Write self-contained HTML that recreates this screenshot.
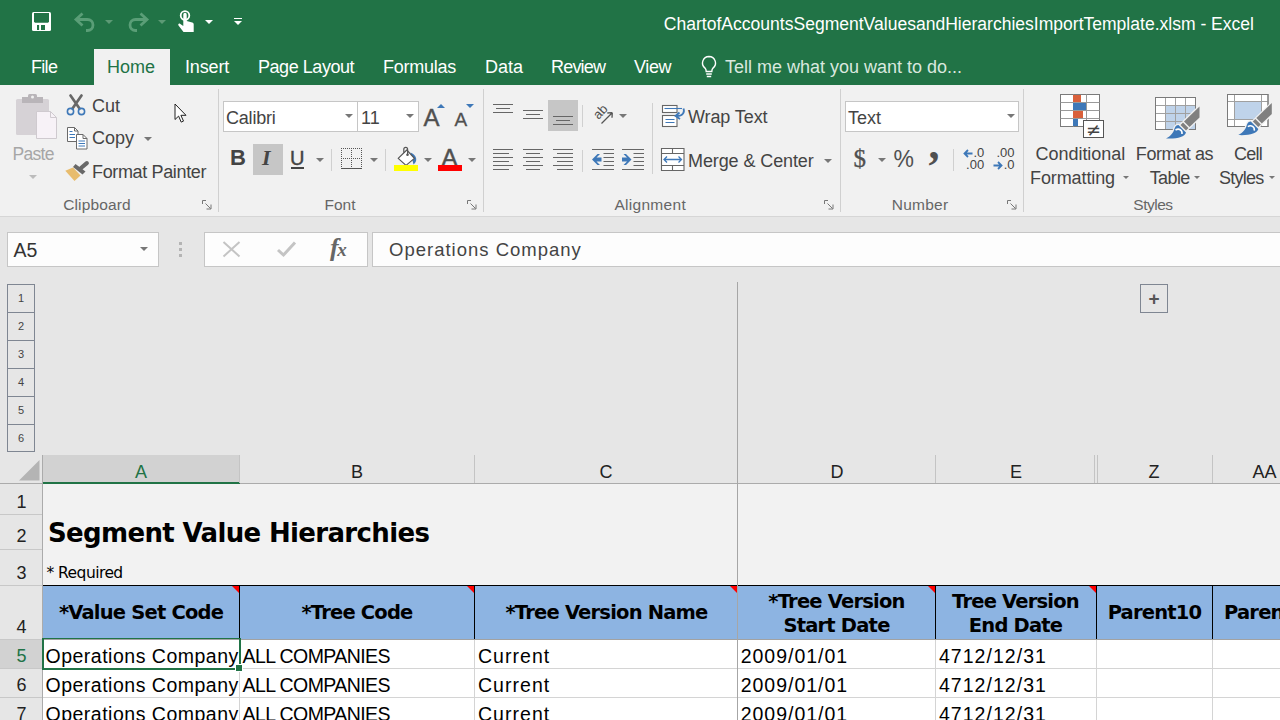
<!DOCTYPE html>
<html>
<head>
<meta charset="utf-8">
<title>Excel</title>
<style>
html,body{margin:0;padding:0;}
body{width:1280px;height:720px;overflow:hidden;position:relative;background:#e6e6e6;font-family:"Liberation Sans",sans-serif;color:#444;}
.abs,.t{position:absolute;}
.t{white-space:nowrap;line-height:1;}
svg{position:absolute;overflow:visible;}
/* title + tabs */
#green{left:0;top:0;width:1280px;height:85px;background:#217346;}
#title{right:26px;top:16px;font-size:17.55px;color:#fff;}
.tab{top:58px;font-size:18px;color:#fff;}
#hometab{left:94px;top:49px;width:76px;height:36px;background:#f1f1f1;}
/* ribbon */
#ribbon{left:0;top:85px;width:1280px;height:131px;background:#f1f1f1;}
#ribline{left:0;top:216px;width:1280px;height:1px;background:#d6d6d6;}
.rt{font-size:18px;color:#444;}
.gl{font-size:15.5px;color:#666;top:196.7px;}
.sep{width:1px;background:#d0d0d0;top:89px;height:123px;}
.box{background:#fff;border:1px solid #c6c6c6;box-sizing:border-box;}
.da{width:0;height:0;border-left:4px solid transparent;border-right:4px solid transparent;border-top:4px solid #777;}
.ua{width:0;height:0;border-left:4px solid transparent;border-right:4px solid transparent;border-bottom:4px solid #3e78b8;}
/* formula bar */
/* grid */
.hdr{background:#e6e6e6;}
.ch{top:463px;font-size:18px;color:#222;transform:translateX(-50%);}
.rh{font-size:18px;color:#222;left:0.5px;width:42px;text-align:center;}
.vl{width:1px;background:#b4b4b4;}
.cell{font-size:19.5px;color:#000;}
.c1{letter-spacing:0.5px;}.c2{letter-spacing:-0.58px;}.c3{letter-spacing:1.03px;}.c4{letter-spacing:0.98px;}.c5{letter-spacing:1.03px;}
.th{font-family:"DejaVu Sans",sans-serif;font-weight:bold;color:#000;font-size:19.5px;text-align:center;line-height:24.5px;white-space:nowrap;transform:translateX(-50%);letter-spacing:-0.8px;}
.ob{left:7px;width:28px;height:28px;border:1px solid #7f8692;box-sizing:border-box;font-size:11px;color:#444;text-align:center;line-height:27px;}
</style>
</head>
<body>
<div class="abs" id="green"></div>
<div class="abs" id="hometab"></div>
<div class="t" id="title">ChartofAccountsSegmentValuesandHierarchiesImportTemplate.xlsm - Excel</div>

<div class="t tab" style="left:31px;letter-spacing:-0.7px">File</div>
<div class="t tab" style="left:107px;color:#217346">Home</div>
<div class="t tab" style="left:185px;letter-spacing:-0.15px">Insert</div>
<div class="t tab" style="left:258px;letter-spacing:-0.45px">Page Layout</div>
<div class="t tab" style="left:383px;letter-spacing:-0.25px">Formulas</div>
<div class="t tab" style="left:485px">Data</div>
<div class="t tab" style="left:551px;letter-spacing:-0.8px">Review</div>
<div class="t tab" style="left:634px;letter-spacing:-0.4px">View</div>
<div class="t tab" style="left:725px;color:#d9e8df">Tell me what you want to do...</div>

<div class="abs" id="ribbon"></div>
<div class="abs" id="ribline"></div>

<!-- RIBBON CONTENT -->
<!-- quick access toolbar -->
<svg style="left:32px;top:12px" width="20" height="20" viewBox="0 0 20 20"><rect x="0" y="0" width="19" height="19" rx="1.500" fill="#fff"/><path d="M2 1h15v8.800l-1 1h-13l-1-1z" fill="#217346"/><rect x="5" y="13" width="2.100" height="5" fill="#217346"/><rect x="9" y="13" width="4" height="5" fill="#217346"/></svg>
<svg style="left:74px;top:12px" width="22" height="20" viewBox="0 0 22 20" fill="none" stroke="#5a9e77" stroke-width="2.800"><path d="M8.500 1.500L2 7.500L8.500 13.500"/><path d="M2.500 7.500H13.500a5.500 5.500 0 0 1 0 11h-1.500"/></svg>
<div class="abs da" style="left:105px;top:20px;border-top-color:#5c9a75"></div>
<svg style="left:127px;top:12px" width="22" height="20" viewBox="0 0 22 20" fill="none" stroke="#5a9e77" stroke-width="2.800"><path d="M13.500 1.500L20 7.500L13.500 13.500"/><path d="M19.500 7.500H8.500a5.500 5.500 0 0 0 0 11h1.500"/></svg>
<div class="abs da" style="left:158px;top:20px;border-top-color:#5c9a75"></div>
<svg style="left:177px;top:10px" width="18" height="23" viewBox="0 0 18 23"><circle cx="8" cy="5.500" r="4.300" fill="none" stroke="#fff" stroke-width="1.800"/><path d="M6.300 4.500a1.700 1.700 0 0 1 3.400 0V11l5.500 1.500c1 .3 1.500 1 1.500 2V22H6.500L1.500 15.500c-.8-1.200.6-2.500 1.800-1.600L6.300 16z" fill="#fff"/></svg>
<div class="abs da" style="left:205px;top:20px;border-top-color:#fff"></div>
<div class="abs" style="left:234px;top:17.500px;width:8px;height:1.500px;background:#fff"></div>
<div class="abs da" style="left:234px;top:21px;border-top-color:#fff"></div>

<!-- tell me bulb -->
<svg style="left:700px;top:55px" width="18" height="24" viewBox="0 0 18 24" fill="none" stroke="#fff" stroke-width="1.400"><path d="M9 1.500a6.500 6.500 0 0 0-4 11.600c.8.800 1.200 1.800 1.200 3.400h5.600c0-1.600.4-2.600 1.200-3.400A6.500 6.500 0 0 0 9 1.500z"/><path d="M6.200 19h5.600M6.800 21.500h4.400"/></svg>

<!-- CLIPBOARD -->
<svg style="left:15px;top:93px" width="44" height="48" viewBox="0 0 44 48"><rect x="1" y="6" width="33" height="36" rx="1.500" fill="#d6d2d6"/><rect x="7" y="4" width="21" height="6" fill="#b9b5b9"/><rect x="13" y="1" width="9" height="6" rx="1.500" fill="#b9b5b9"/><circle cx="17.500" cy="4" r="1.500" fill="#f1f1f1"/><path d="M21.500 18.500h14l6 6v21h-20z" fill="#f7f2f7" stroke="#cfcacf" stroke-width="1"/><path d="M35.500 18.500v6h6" fill="none" stroke="#cfcacf" stroke-width="1"/></svg>
<div class="t rt" style="left:12.500px;top:145.500px;color:#a6a6a6;font-size:17.500px;letter-spacing:-0.700px">Paste</div>
<div class="abs da" style="left:28.500px;top:175px;border-top-color:#bcbcbc"></div>

<svg style="left:66px;top:94px" width="20" height="22" viewBox="0 0 20 22" fill="none"><path d="M4.500 1.500L13.500 14.500M15.500 1.500L6.500 14.500" stroke="#686868" stroke-width="2.700" stroke-linecap="round"/><circle cx="4.500" cy="17.500" r="3.100" stroke="#3e78b8" stroke-width="1.600"/><circle cx="15.500" cy="17.500" r="3.100" stroke="#3e78b8" stroke-width="1.600"/></svg>
<div class="t rt" style="left:92px;top:96.500px">Cut</div>

<svg style="left:67px;top:127px" width="21" height="23" viewBox="0 0 21 23" fill="none"><path d="M.5.500h7l3.500 3.500v10.500H.500z" fill="#fff" stroke="#6a6a6a"/><path d="M7.500.500v3.500H11" stroke="#6a6a6a"/><path d="M2.500 4.500h3M2.500 7.500h5.500M2.500 10.500h5.500" stroke="#3e78b8"/><path d="M9.500 7.500h6.500l4 4v10.500H9.500z" fill="#fff" stroke="#6a6a6a"/><path d="M16 7.500v4h4" stroke="#6a6a6a"/><path d="M11.500 14h6.500M11.500 16.500h6.500M11.500 19h6.500" stroke="#3e78b8"/></svg>
<div class="t rt" style="left:92px;top:129px">Copy</div>
<div class="abs da" style="left:143.500px;top:137px"></div>

<svg style="left:65px;top:160px" width="24" height="22" viewBox="0 0 24 22"><path d="M21.800 3.200L16 8" stroke="#686868" stroke-width="4.200" stroke-linecap="round" fill="none"/><path d="M10.500 4L20.500 11.500l-3 3L8 7z" fill="#686868"/><path d="M.3 10.800L8 7.500l7.500 8L9.500 21z" fill="#e8bc6d"/></svg>
<div class="t rt" id="fp" style="left:92px;top:162.500px;letter-spacing:-0.350px">Format Painter</div>

<div class="t gl" style="left:63.200px;letter-spacing:0.13px">Clipboard</div>
<svg class="ln" style="left:202px;top:200px" width="10" height="10" viewBox="0 0 10 10" fill="none" stroke="#777" stroke-width="1"><path d="M.5 4V.500H4"/><path d="M3.500 3.500l5 5M9 4.500V9H4.500"/></svg>
<div class="abs sep" style="left:218px"></div>

<!-- mouse cursor -->
<svg style="left:173.500px;top:103px" width="14" height="21" viewBox="0 0 14 21"><path d="M1 1v15.500l3.600-3.400 2.600 6 2.300-1-2.600-5.800H12z" fill="#fff" stroke="#222" stroke-width="1"/></svg>

<!-- FONT -->
<div class="abs box" style="left:223px;top:101px;width:135px;height:31px"></div>
<div class="abs box" style="left:357px;top:101px;width:62px;height:31px"></div>
<div class="t rt" style="left:226px;top:108.500px;letter-spacing:-0.200px">Calibri</div>
<div class="t rt" style="left:361px;top:108.500px">11</div>
<div class="abs da" style="left:345px;top:114px"></div>
<div class="abs da" style="left:406px;top:114px"></div>
<div class="t" style="left:423.500px;top:105.500px;font-size:24px;color:#505050;-webkit-text-stroke:0.4px #505050">A</div>
<div class="abs ua" style="left:437px;top:104px"></div>
<div class="t" style="left:454.500px;top:109.500px;font-size:19px;color:#505050;-webkit-text-stroke:0.3px #505050">A</div>
<div class="abs da" style="left:466px;top:104px;border-top-color:#3e78b8"></div>

<div class="abs" style="left:253px;top:144px;width:30px;height:31px;background:#c6c6c6"></div>
<div class="t" style="left:230px;top:147px;font-size:22px;font-weight:bold;color:#444">B</div>
<div class="t" style="left:262px;top:147px;font-size:22px;font-weight:bold;font-style:italic;font-family:'Liberation Serif',serif;color:#444">I</div>
<div class="t" style="left:290px;top:147.500px;font-size:20px;color:#444;-webkit-text-stroke:0.400px #444">U</div>
<div class="abs" style="left:291px;top:167px;width:13px;height:1.500px;background:#444"></div>
<div class="abs da" style="left:315.500px;top:158px"></div>
<div class="abs" style="left:331px;top:149px;width:1px;height:22px;background:#d0d0d0"></div>
<svg style="left:341px;top:148px" width="22" height="22" viewBox="0 0 22 22" fill="none" stroke="#555" stroke-width="1" shape-rendering="crispEdges"><path d="M0 .5h21M0 10.500h21M.5 0v20M10.500 0v20M20.500 0v20" stroke-dasharray="1 1"/><path d="M0 20.500h21" stroke="#555" stroke-width="1.200"/></svg>
<div class="abs da" style="left:369.500px;top:158px"></div>
<div class="abs" style="left:385px;top:149px;width:1px;height:22px;background:#d0d0d0"></div>
<svg style="left:394px;top:146px" width="26" height="26" viewBox="0 0 26 26"><path d="M16.500 6.500c4 1.500 6.500 5 5.500 8.500-.5 1.500-1.500 2.500-2.500 3.500z" fill="#3e78b8"/><path d="M12.800 4L4.200 12.400l7.800 7 8.400-7z" fill="#fff" stroke="#555" stroke-width="1.200" stroke-linejoin="round"/><path d="M9.800 6.800V3.200a1.900 1.900 0 0 1 3.800 0V8.500" fill="none" stroke="#555" stroke-width="1.200"/><circle cx="13.500" cy="8.800" r="1.300" fill="#555"/><rect x="0" y="19" width="24" height="6" fill="#ffff00"/></svg>
<div class="abs da" style="left:423.500px;top:158px"></div>
<div class="t" style="left:441.500px;top:145.500px;font-size:24px;color:#505050;-webkit-text-stroke:0.5px #505050">A</div>
<div class="abs" style="left:438px;top:165px;width:24px;height:6px;background:#ff0000"></div>
<div class="abs da" style="left:467.500px;top:158px"></div>

<div class="t gl" style="left:324.500px">Font</div>
<svg class="ln" style="left:467px;top:200px" width="10" height="10" viewBox="0 0 10 10" fill="none" stroke="#777" stroke-width="1"><path d="M.5 4V.500H4"/><path d="M3.500 3.500l5 5M9 4.500V9H4.500"/></svg>
<div class="abs sep" style="left:483px"></div>

<!-- ALIGNMENT -->
<div class="abs" style="left:548px;top:100px;width:30px;height:31px;background:#c6c6c6"></div>
<svg style="left:493px;top:100px" width="90" height="30" viewBox="0 0 90 30" stroke="#666" stroke-width="1.1" fill="none"><path d="M0 4.500h20M3 8.500h14M0 12.500h20"/><path d="M30 10.500h20M33 14.500h14M30 18.500h20"/><path d="M60 16.500h20M63 20.500h14M60 24.500h20"/></svg>
<div class="abs" style="left:582px;top:105px;width:1px;height:22px;background:#d0d0d0"></div>
<svg style="left:592px;top:104px" width="22" height="22" viewBox="0 0 22 22" fill="none" stroke="#555" stroke-width="1.300"><path d="M9.500 19.500L20 9M20.300 8.700l-5 .3M20.300 8.700l-.3 5"/><text x="0" y="0" font-size="13" font-family="Liberation Sans, sans-serif" fill="#505050" stroke="none" transform="translate(6.500 16) rotate(-47)">ab</text></svg>
<div class="abs da" style="left:618.500px;top:113.500px"></div>
<svg style="left:493px;top:149px" width="82" height="22" viewBox="0 0 82 22" stroke="#666" stroke-width="1.1" fill="none"><path d="M0 .5h20M0 4.500h16M0 8.500h20M0 12.500h16M0 16.500h20M0 20.500h16"/><path d="M30 .5h20M33 4.500h14M30 8.500h20M33 12.500h14M30 16.500h20M33 20.500h14"/><path d="M60 .5h20M64 4.500h16M60 8.500h20M64 12.500h16M60 16.500h20M64 20.500h16"/></svg>
<div class="abs" style="left:582px;top:150px;width:1px;height:22px;background:#d0d0d0"></div>
<svg style="left:592px;top:149px" width="54" height="22" viewBox="0 0 54 22" stroke="#666" stroke-width="1.1" fill="none"><path d="M0 .5h22M11.500 4.500h10.500M11.500 8.500h10.500M11.500 12.500h10.500M11.500 16.500h10.500M0 20.500h22"/><path d="M0 10.500l5.500-5.500h2.500l-3.500 3.500h5v4h-5l3.500 3.500h-2.500z" fill="#3e78b8" stroke="none"/><path d="M30 .5h22M41.500 4.500h10.500M41.500 8.500h10.500M41.500 12.500h10.500M41.500 16.500h10.500M30 20.500h22"/><path d="M39.500 10.500l-5.500-5.500h-2.500l3.500 3.500h-5v4h5l-3.500 3.500h2.500z" fill="#3e78b8" stroke="none"/></svg>
<div class="abs" style="left:652px;top:103px;width:1px;height:71px;background:#d0d0d0"></div>
<svg style="left:661px;top:104px" width="26" height="24" viewBox="0 0 26 24" fill="none"><rect x="1.500" y="1.500" width="14.500" height="7" fill="#fff" stroke="#666" stroke-width="1.1"/><rect x="1.500" y="11.500" width="14.500" height="11" fill="#fff" stroke="#666" stroke-width="1.1"/><path d="M3.500 4.500h17.500" stroke="#3e78b8" stroke-width="1.1"/><path d="M4.500 15.500h9M4.500 18.500h9" stroke="#3e78b8" stroke-width="1.1"/><path d="M22.500 4.500c1.500 4-1 7.500-6.500 7.500" stroke="#3e78b8" stroke-width="1.800"/><path d="M18.500 8.500l-4 3.500 4.500 3" stroke="#3e78b8" stroke-width="1.800"/></svg>
<div class="t rt" style="left:688px;top:108px;letter-spacing:-0.100px">Wrap Text</div>
<svg style="left:661px;top:148px" width="24" height="23" viewBox="0 0 24 23" fill="none" stroke="#666" stroke-width="1.1"><path d="M.5.500h22.500v22H.500z" fill="#fff"/><path d="M.5 5.500h22.500M.500 17.500h22.500M11.500 .500v5M11.500 17.500v5"/><path d="M3 11.500h17.500M6 8.500l-3 3 3 3M17.500 8.500l3 3-3 3" stroke="#3e78b8" stroke-width="1.300"/></svg>
<div class="t rt" id="mc" style="left:688px;top:151.500px;letter-spacing:-0.100px">Merge &amp; Center</div>
<div class="abs da" style="left:823.500px;top:159px"></div>
<div class="t gl" style="left:614.400px;letter-spacing:0.3px">Alignment</div>
<svg class="ln" style="left:824px;top:200px" width="10" height="10" viewBox="0 0 10 10" fill="none" stroke="#777" stroke-width="1"><path d="M.5 4V.500H4"/><path d="M3.500 3.500l5 5M9 4.500V9H4.500"/></svg>
<div class="abs sep" style="left:840px"></div>

<!-- NUMBER -->
<div class="abs box" style="left:845px;top:101px;width:174px;height:31px"></div>
<div class="t rt" style="left:848px;top:108.500px">Text</div>
<div class="abs da" style="left:1006.500px;top:114px"></div>
<div class="t" style="left:853.500px;top:146px;font-size:25px;color:#505050;font-family:'Liberation Serif',serif;-webkit-text-stroke:0.3px #505050">$</div>
<div class="abs da" style="left:877.500px;top:157.500px"></div>
<div class="t" style="left:893.500px;top:148px;font-size:23px;color:#505050">%</div>
<div class="t" id="comma" style="left:928.500px;top:122.500px;font-size:44px;font-weight:bold;font-family:'Liberation Serif',serif;color:#505050">,</div>
<div class="abs" style="left:953px;top:149px;width:1px;height:22px;background:#d0d0d0"></div>
<div class="t" style="left:973.400px;top:145.600px;font-size:13px;color:#444">.0</div>
<div class="t" style="left:966.100px;top:157.800px;font-size:13px;color:#444">.00</div>
<svg style="left:963px;top:148.500px" width="10" height="9" viewBox="0 0 10 9" fill="none" stroke="#3e78b8" stroke-width="1.800"><path d="M9.500 4.500H1.500M5 1L1.500 4.500 5 8"/></svg>
<div class="t" style="left:996.400px;top:145.600px;font-size:13px;color:#444">.00</div>
<div class="t" style="left:1003.700px;top:157.800px;font-size:13px;color:#444">.0</div>
<svg style="left:992.500px;top:160.800px" width="10" height="9" viewBox="0 0 10 9" fill="none" stroke="#3e78b8" stroke-width="1.800"><path d="M.5 4.500H8.500M5 1l3.500 3.500L5 8"/></svg>
<div class="t gl" style="left:891.700px;letter-spacing:0.25px">Number</div>
<svg class="ln" style="left:1007px;top:200px" width="10" height="10" viewBox="0 0 10 10" fill="none" stroke="#777" stroke-width="1"><path d="M.5 4V.500H4"/><path d="M3.500 3.500l5 5M9 4.500V9H4.500"/></svg>
<div class="abs sep" style="left:1023px"></div>

<!-- STYLES -->
<svg style="left:1060px;top:94px" width="46" height="46" viewBox="0 0 46 46" fill="none"><rect x=".5" y=".5" width="39" height="32" fill="#fff" stroke="#7a7a7a"/><path d="M.5 8.500h39M.500 16.500h39M.500 24.500h39M13.500.500v32M26.500.500v32" stroke="#9a9a9a"/><rect x="13" y="1" width="8" height="7" fill="#d9603b"/><rect x="13" y="9" width="13" height="7" fill="#3e78b8"/><rect x="13" y="17" width="10" height="7" fill="#d9603b"/><rect x="13" y="25" width="5" height="7" fill="#3e78b8"/><rect x="23.500" y="26.500" width="20" height="17" fill="#fff" stroke="#555"/><text x="33.500" y="41.500" font-size="18" text-anchor="middle" font-family="DejaVu Sans, sans-serif" fill="#444">≠</text></svg>
<div class="t rt" id="cf1" style="left:1035.500px;top:145px;letter-spacing:-0.030px">Conditional</div>
<div class="t rt" id="cf2" style="left:1030px;top:169px;letter-spacing:-0.100px">Formatting</div>
<div class="abs da" style="left:1122.500px;top:176px;border-width:3.500px 3.500px 0;"></div>

<svg style="left:1155px;top:96px" width="48" height="46" viewBox="0 0 48 46" fill="none"><rect x=".5" y="1.500" width="40" height="32" fill="#fff" stroke="#7a7a7a"/><rect x="10.500" y="9.500" width="30" height="24" fill="#bfd3ea"/><path d="M.5 9.500h40M.500 17.500h40M.500 25.500h40M10.500 1.500v32M20.500 1.500v32M30.500 1.500v32" stroke="#a0a0a0"/><rect x=".5" y="1.500" width="40" height="32" stroke="#7a7a7a"/><g transform="translate(0 0)"><path d="M44.500 10.500v11l-10 9.500-5.500-5.500z M28 26.500l5.500 5.500-2.500 2.500-5.500-5.500z M23.500 29l7.500 7.500c-1.500 4.500-8.500 6.500-20 6 5-2.500 7.500-6 8.500-10 .8-2.500 2.200-3.500 4-3.500z" fill="none" stroke="#f1f1f1" stroke-width="2.500" stroke-linejoin="round"/><path d="M44.500 10.500v11l-10 9.500-5.500-5.500z" fill="#808080"/><path d="M28 26.500l5.500 5.500-2.500 2.500-5.500-5.500z" fill="#808080"/><path d="M23.500 29l7.500 7.500c-1.500 4.500-8.500 6.500-20 6 5-2.500 7.500-6 8.500-10 .8-2.500 2.200-3.500 4-3.500z" fill="#3e78b8"/><path d="M20.500 34c3.500-2 7 0 6.500 4" fill="none" stroke="#fff" stroke-width="1.600"/></g></svg>
<div class="t rt" id="ft1" style="left:1135.800px;top:145px;letter-spacing:-0.400px">Format as</div>
<div class="t rt" id="ft2" style="left:1149.700px;top:169px;letter-spacing:-0.600px">Table</div>
<div class="abs da" style="left:1194px;top:176px;border-width:3.500px 3.500px 0;"></div>

<svg style="left:1227px;top:94px" width="56" height="48" viewBox="0 0 56 48" fill="none"><rect x=".5" y=".5" width="40.500" height="32" fill="#fff" stroke="#7a7a7a"/><rect x="8" y="7.500" width="26" height="18" fill="#bfd3ea"/><path d="M.5 7.500h40.500M.500 25.500h40.500M7.500 .500v32M34.500 .500v32" stroke="#a0a0a0"/><rect x=".5" y=".5" width="40.500" height="32" stroke="#7a7a7a"/><g transform="translate(0.3 -1.4)"><path d="M44.500 10.500v11l-10 9.500-5.500-5.500z M28 26.500l5.500 5.500-2.500 2.500-5.500-5.500z M23.500 29l7.500 7.500c-1.500 4.500-8.500 6.500-20 6 5-2.500 7.500-6 8.500-10 .8-2.500 2.200-3.500 4-3.500z" fill="none" stroke="#f1f1f1" stroke-width="2.500" stroke-linejoin="round"/><path d="M44.500 10.500v11l-10 9.500-5.500-5.500z" fill="#808080"/><path d="M28 26.500l5.500 5.500-2.500 2.500-5.500-5.500z" fill="#808080"/><path d="M23.500 29l7.500 7.500c-1.500 4.500-8.500 6.500-20 6 5-2.500 7.500-6 8.500-10 .8-2.500 2.200-3.500 4-3.500z" fill="#3e78b8"/><path d="M20.500 34c3.500-2 7 0 6.500 4" fill="none" stroke="#fff" stroke-width="1.600"/></g></svg>
<div class="t rt" id="cs1" style="left:1234px;top:145px;letter-spacing:-0.750px">Cell</div>
<div class="t rt" id="cs2" style="left:1219px;top:169px;letter-spacing:-0.750px">Styles</div>
<div class="abs da" style="left:1268.500px;top:176px;border-width:3.500px 3.500px 0;"></div>
<div class="t gl" style="left:1133.300px;letter-spacing:-0.5px">Styles</div>


<!-- FORMULA BAR -->
<div class="abs box" style="left:7px;top:232px;width:152px;height:35px;background:#fdfdfd"></div>
<div class="t" style="left:13.500px;top:240.700px;font-size:19.500px;color:#333">A5</div>
<div class="abs da" style="left:140px;top:247px"></div>
<div class="abs" style="left:179px;top:241.500px;width:3px;height:3px;background:#b4b4b4;box-shadow:0 6px 0 #b4b4b4,0 12px 0 #b4b4b4"></div>
<div class="abs box" style="left:204px;top:232px;width:164px;height:35px;background:#fdfdfd"></div>
<svg style="left:222px;top:241px" width="19" height="16" viewBox="0 0 19 16" fill="none" stroke="#c4c4c4" stroke-width="2"><path d="M1.500 1l16 14.500M17.500 1L1.500 15.500"/></svg>
<svg style="left:277px;top:241px" width="19" height="16" viewBox="0 0 19 16" fill="none" stroke="#c4c4c4" stroke-width="3"><path d="M1 9l5.500 5L18 1.500"/></svg>
<div class="t" style="left:330px;top:235px;font-size:26px;font-style:italic;font-weight:bold;font-family:'Liberation Serif',serif;color:#666;letter-spacing:-1.500px">f<span style="font-size:19px">x</span></div>
<div class="abs box" style="left:372px;top:232px;width:920px;height:35px;background:#fdfdfd"></div>
<div class="t" id="fbt" style="left:389px;top:240.500px;font-size:18.500px;color:#444;letter-spacing:1.000px">Operations Company</div>

<!-- outline buttons -->
<div class="abs ob" style="top:284px;height:29px">1</div>
<div class="abs ob" style="top:312px;height:29px">2</div>
<div class="abs ob" style="top:340px;height:29px">3</div>
<div class="abs ob" style="top:368px;height:29px">4</div>
<div class="abs ob" style="top:396px;height:29px">5</div>
<div class="abs ob" style="top:424px;height:28px">6</div>
<div class="abs ob" id="plus" style="left:1140px;top:284px;width:28px;height:29px;font-size:19px;font-weight:bold;color:#555;line-height:27px;border-color:#7f8692">+</div>


<!-- GRID -->
<!-- backgrounds -->
<div class="abs" style="left:43px;top:484px;width:1237px;height:102px;background:#f2f2f2"></div>
<div class="abs" style="left:43px;top:586px;width:1237px;height:53px;background:#8db4e2"></div>
<div class="abs" style="left:43px;top:639px;width:1237px;height:81px;background:#fff"></div>
<!-- column header -->
<div class="abs" style="left:43px;top:455px;width:197px;height:28px;background:#d2d2d2"></div>
<div class="abs" style="left:0;top:483px;width:1280px;height:1px;background:#ababab"></div>
<div class="abs" style="left:43px;top:482px;width:197px;height:2px;background:#217346"></div>
<svg style="left:18.500px;top:459.500px" width="21" height="21" viewBox="0 0 21 21"><path d="M20.500 0v20.500H0z" fill="#b4b4b4"/></svg>
<div class="abs vl" style="left:239px;top:455px;height:28px;background:#c4c4c4"></div>
<div class="abs vl" style="left:474px;top:455px;height:28px;background:#c4c4c4"></div>
<div class="abs vl" style="left:935px;top:455px;height:28px;background:#c4c4c4"></div>
<div class="abs vl" style="left:1094px;top:455px;height:28px;background:#c4c4c4"></div>
<div class="abs vl" style="left:1097px;top:455px;height:28px;background:#c4c4c4"></div>
<div class="abs vl" style="left:1212px;top:455px;height:28px;background:#c4c4c4"></div>
<div class="t ch" style="left:141px;color:#217346">A</div>
<div class="t ch" style="left:357px">B</div>
<div class="t ch" style="left:606px">C</div>
<div class="t ch" style="left:837px">D</div>
<div class="t ch" style="left:1016px">E</div>
<div class="t ch" style="left:1154px">Z</div>
<div class="t ch" style="left:1264.500px">AA</div>
<!-- row header -->
<div class="abs" style="left:0;top:640px;width:42px;height:28px;background:#d2d2d2"></div>
<div class="abs vl" style="left:42px;top:455px;height:265px;background:#ababab"></div>
<div class="abs" style="left:0;top:514px;width:42px;height:1px;background:#c8c8c8"></div>
<div class="abs" style="left:0;top:549px;width:42px;height:1px;background:#c8c8c8"></div>
<div class="abs" style="left:0;top:585px;width:42px;height:1px;background:#c8c8c8"></div>
<div class="abs" style="left:0;top:639px;width:42px;height:1px;background:#c8c8c8"></div>
<div class="abs" style="left:0;top:668px;width:42px;height:1px;background:#c8c8c8"></div>
<div class="abs" style="left:0;top:697px;width:42px;height:1px;background:#c8c8c8"></div>
<div class="t rh" style="top:492.500px">1</div>
<div class="t rh" style="top:526.500px">2</div>
<div class="t rh" style="top:563.8px">3</div>
<div class="t rh" style="top:618px">4</div>
<div class="t rh" style="top:646.500px;color:#217346">5</div>
<div class="t rh" style="top:675.500px">6</div>
<div class="t rh" style="top:704.500px">7</div>
<!-- titles -->
<div class="t" id="seg" style="left:48px;top:519.5px;font-family:'DejaVu Sans',sans-serif;font-weight:bold;font-size:26px;color:#000;letter-spacing:-0.650px">Segment Value Hierarchies</div>
<div class="t" id="req" style="left:46.500px;top:566px;font-family:'DejaVu Sans',sans-serif;font-size:15.5px;color:#000;letter-spacing:-0.550px">* Required</div>
<!-- grid lines rows 5+ -->
<div class="abs" style="left:43px;top:668px;width:1237px;height:1px;background:#d4d4d4"></div>
<div class="abs" style="left:43px;top:697px;width:1237px;height:1px;background:#d4d4d4"></div>
<div class="abs vl" style="left:239px;top:639px;height:81px;background:#d4d4d4"></div>
<div class="abs vl" style="left:474px;top:639px;height:81px;background:#d4d4d4"></div>
<div class="abs vl" style="left:935px;top:639px;height:81px;background:#d4d4d4"></div>
<div class="abs vl" style="left:1096px;top:639px;height:81px;background:#d4d4d4"></div>
<div class="abs vl" style="left:1212px;top:639px;height:81px;background:#d4d4d4"></div>
<!-- row 4 header borders -->
<div class="abs" style="left:43px;top:585px;width:1237px;height:1px;background:#000"></div>
<div class="abs" style="left:43px;top:639px;width:1237px;height:1px;background:#a2a2a2"></div>
<div class="abs vl" style="left:239px;top:586px;height:53px;background:#000"></div>
<div class="abs vl" style="left:474px;top:586px;height:53px;background:#000"></div>
<div class="abs vl" style="left:935px;top:586px;height:53px;background:#000"></div>
<div class="abs vl" style="left:1096px;top:586px;height:53px;background:#000"></div>
<div class="abs vl" style="left:1212px;top:586px;height:53px;background:#000"></div>
<!-- freeze line -->
<div class="abs vl" style="left:737px;top:282px;height:438px;background:#a6a6a6"></div>
<!-- red comment triangles -->
<svg style="left:232px;top:586px" width="7" height="7"><path d="M0 0h7v7z" fill="#ff0000"/></svg>
<svg style="left:467px;top:586px" width="7" height="7"><path d="M0 0h7v7z" fill="#ff0000"/></svg>
<svg style="left:730px;top:586px" width="7" height="7"><path d="M0 0h7v7z" fill="#ff0000"/></svg>
<svg style="left:928px;top:586px" width="7" height="7"><path d="M0 0h7v7z" fill="#ff0000"/></svg>
<svg style="left:1089px;top:586px" width="7" height="7"><path d="M0 0h7v7z" fill="#ff0000"/></svg>
<!-- row 4 text -->
<div class="abs th" id="th1" style="left:141px;top:600.8px">*Value Set Code</div>
<div class="abs th" id="th2" style="left:357px;top:600.8px">*Tree Code</div>
<div class="abs th" id="th3" style="left:606.500px;top:600.8px">*Tree Version Name</div>
<div class="abs th" id="th4" style="left:836.500px;top:589.8px">*Tree Version<br>Start Date</div>
<div class="abs th" id="th5" style="left:1015.500px;top:589.8px">Tree Version<br>End Date</div>
<div class="abs th" id="th6" style="left:1154.500px;top:600.8px">Parent10</div>
<div class="abs th" id="th7" style="left:1224px;top:600.8px;transform:none">Parent11</div>
<!-- data -->
<div class="abs" style="left:43px;top:639px;width:196px;height:81px;overflow:hidden">
<div class="t cell c1" style="left:2.500px;top:7.5px">Operations Company</div>
<div class="t cell c1" style="left:2.500px;top:36.5px">Operations Company</div>
<div class="t cell c1" style="left:2.500px;top:65.5px">Operations Company</div>
</div>
<div class="t cell c2" style="left:242.500px;top:646.5px">ALL COMPANIES</div>
<div class="t cell c2" style="left:242.500px;top:675.5px">ALL COMPANIES</div>
<div class="t cell c2" style="left:242.500px;top:704.5px">ALL COMPANIES</div>
<div class="t cell c3" style="left:478px;top:646.5px">Current</div>
<div class="t cell c3" style="left:478px;top:675.5px">Current</div>
<div class="t cell c3" style="left:478px;top:704.5px">Current</div>
<div class="t cell c4" style="left:740.700px;top:646.5px">2009/01/01</div>
<div class="t cell c4" style="left:740.700px;top:675.5px">2009/01/01</div>
<div class="t cell c4" style="left:740.700px;top:704.5px">2009/01/01</div>
<div class="t cell c5" style="left:939px;top:646.5px">4712/12/31</div>
<div class="t cell c5" style="left:939px;top:675.5px">4712/12/31</div>
<div class="t cell c5" style="left:939px;top:704.5px">4712/12/31</div>
<!-- selection -->
<div class="abs" style="left:42px;top:638px;width:199px;height:1px;background:#217346"></div>
<div class="abs" style="left:42px;top:638px;width:2px;height:32px;background:#217346"></div>
<div class="abs" style="left:239px;top:639px;width:2px;height:31px;background:#217346"></div>
<div class="abs" style="left:42px;top:668px;width:199px;height:2px;background:#217346"></div>
<div class="abs" style="left:235px;top:664px;width:6px;height:6px;background:#217346;border:1px solid #fff"></div>

</body>
</html>
